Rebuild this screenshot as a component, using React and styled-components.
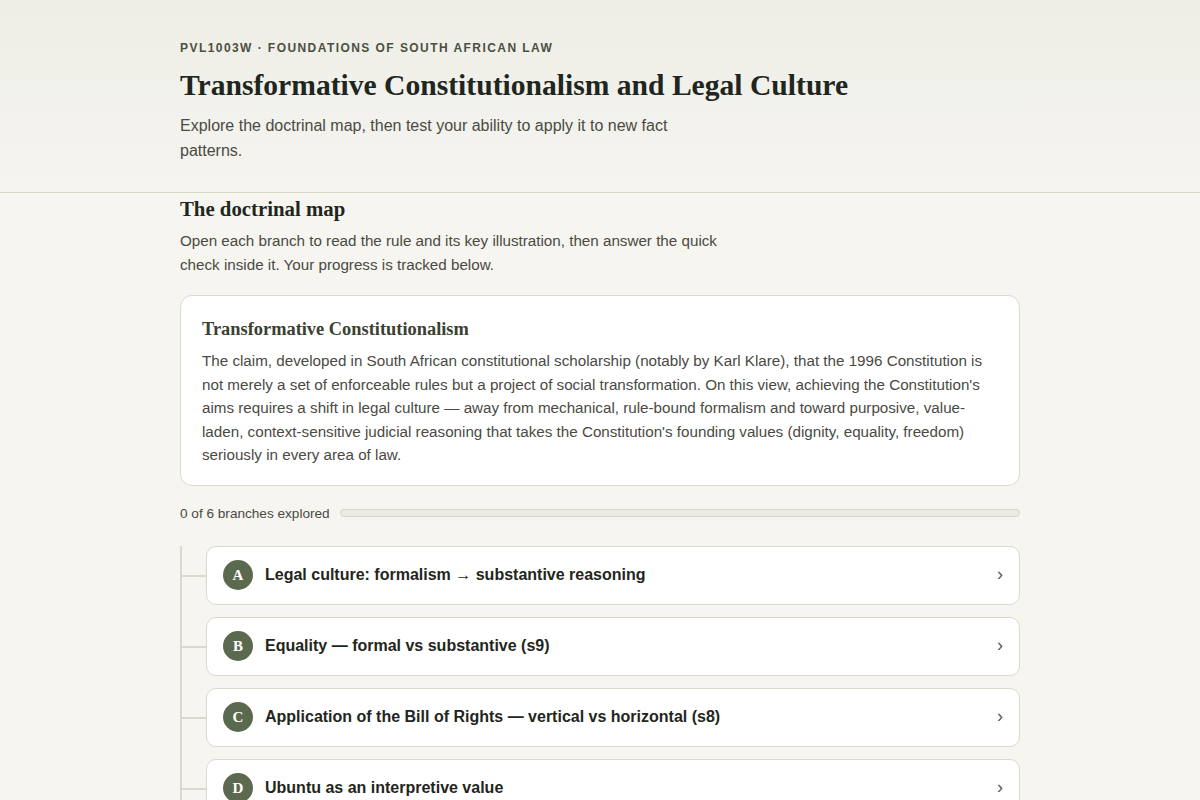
import React from "react";
import styled, { createGlobalStyle } from "styled-components";

const Global = createGlobalStyle`
  html, body { margin: 0; padding: 0; }
  body {
    background: #f6f5f0;
    font-family: "Liberation Sans", Arial, sans-serif;
    color: #2a2e26;
  }
  * { box-sizing: border-box; }
`;

const Header = styled.header`
  background: linear-gradient(180deg, #eeeee7 0%, #f5f4ef 100%);
  border-bottom: 1px solid #dcd6c8;
  padding: 40px 0 29px;
`;

const Inner = styled.div`
  width: 840px;
  margin: 0 auto;
`;

const Eyebrow = styled.div`
  font-size: 12px;
  font-weight: 700;
  letter-spacing: 1.44px;
  text-transform: uppercase;
  color: #4a5040;
  line-height: 16px;
`;

const Title = styled.h1`
  font-family: "Liberation Serif", "Times New Roman", serif;
  font-weight: 700;
  font-size: 29.6px;
  line-height: 36px;
  color: #1f2620;
  margin: 11px 0 10px;
`;

const Lead = styled.p`
  margin: 0;
  font-size: 16px;
  line-height: 25px;
  color: #4a4a44;
  max-width: 520px;
`;

const Section = styled.section`
  padding: 3px 0 0;
`;

const SectionTitle = styled.h2`
  font-family: "Liberation Serif", "Times New Roman", serif;
  font-weight: 700;
  font-size: 20.8px;
  line-height: 26px;
  color: #1f2620;
  margin: 0 0 7px;
`;

const SectionText = styled.p`
  margin: 0;
  font-size: 15.2px;
  line-height: 24px;
  color: #4a4a44;
  max-width: 560px;
`;

const DefCard = styled.div`
  margin-top: 18px;
  background: #ffffff;
  border: 1px solid #ddd8cc;
  border-radius: 12px;
  padding: 21px 21px 18px;
`;

const DefTitle = styled.h3`
  font-family: "Liberation Serif", "Times New Roman", serif;
  font-weight: 700;
  font-size: 18.4px;
  line-height: 24px;
  color: #3b4030;
  margin: 0 0 8px;
`;

const DefText = styled.p`
  margin: 0;
  font-size: 15.2px;
  line-height: 23.5px;
  color: #4a4a44;
`;

const Progress = styled.div`
  display: flex;
  align-items: center;
  gap: 10px;
  margin-top: 20px;
`;

const ProgressLabel = styled.span`
  font-size: 13.6px;
  color: #4a4a44;
  white-space: nowrap;
`;

const Track = styled.div`
  flex: 1;
  height: 8px;
  border-radius: 999px;
  background: #ecebe3;
  border: 1px solid #d8d4c6;
  overflow: hidden;
`;

const Fill = styled.div`
  height: 100%;
  background: #5b6a4f;
`;

const Tree = styled.div`
  margin-top: 25px;
  border-left: 2px solid #ddd8cc;
  display: flex;
  flex-direction: column;
  gap: 12px;
  padding-bottom: 40px;
`;

const Branch = styled.div`
  position: relative;
  margin-left: 24px;
  &::before {
    content: "";
    position: absolute;
    left: -24px;
    top: 50%;
    width: 24px;
    height: 2px;
    background: #ddd8cc;
  }
`;

const BranchButton = styled.button`
  width: 100%;
  display: flex;
  align-items: center;
  gap: 12px;
  height: 59px;
  padding: 0 16px;
  background: #ffffff;
  border: 1px solid #ddd8cc;
  border-radius: 10px;
  font-family: "Liberation Sans", Arial, sans-serif;
  text-align: left;
  cursor: pointer;
`;

const Badge = styled.span`
  flex: none;
  width: 30px;
  height: 30px;
  border-radius: 50%;
  background: #5b6a4f;
  color: #ffffff;
  display: flex;
  align-items: center;
  justify-content: center;
  font-family: "Liberation Serif", "Times New Roman", serif;
  font-weight: 700;
  font-size: 15px;
`;

const BranchTitle = styled.span`
  flex: 1;
  font-size: 16px;
  font-weight: 700;
  color: #1f2620;
`;

const Chevron = styled.span`
  font-size: 18px;
  color: #555a50;
  line-height: 1;
  margin-top: -3px;
`;

const branches = [
  { letter: "A", title: "Legal culture: formalism → substantive reasoning" },
  { letter: "B", title: "Equality — formal vs substantive (s9)" },
  { letter: "C", title: "Application of the Bill of Rights — vertical vs horizontal (s8)" },
  { letter: "D", title: "Ubuntu as an interpretive value" },
  { letter: "E", title: "Transformation in private law" },
  { letter: "F", title: "Critiques and limits" },
];

export default function App() {
  const explored = 0;
  return (
    <>
      <Global />
      <Header>
        <Inner>
          <Eyebrow>PVL1003W · Foundations of South African Law</Eyebrow>
          <Title>Transformative Constitutionalism and Legal Culture</Title>
          <Lead>
            Explore the doctrinal map, then test your ability to apply it to new fact patterns.
          </Lead>
        </Inner>
      </Header>
      <Inner>
        <Section>
          <SectionTitle>The doctrinal map</SectionTitle>
          <SectionText>
            Open each branch to read the rule and its key illustration, then answer the quick
            check inside it. Your progress is tracked below.
          </SectionText>
          <DefCard>
            <DefTitle>Transformative Constitutionalism</DefTitle>
            <DefText>
              The claim, developed in South African constitutional scholarship (notably by Karl
              Klare), that the 1996 Constitution is not merely a set of enforceable rules but a
              project of social transformation. On this view, achieving the Constitution's aims
              requires a shift in legal culture — away from mechanical, rule-bound formalism and
              toward purposive, value-laden, context-sensitive judicial reasoning that takes the
              Constitution's founding values (dignity, equality, freedom) seriously in every area
              of law.
            </DefText>
          </DefCard>
          <Progress>
            <ProgressLabel>
              {explored} of {branches.length} branches explored
            </ProgressLabel>
            <Track>
              <Fill style={{ width: `${(explored / branches.length) * 100}%` }} />
            </Track>
          </Progress>
          <Tree>
            {branches.map((b) => (
              <Branch key={b.letter}>
                <BranchButton>
                  <Badge>{b.letter}</Badge>
                  <BranchTitle>{b.title}</BranchTitle>
                  <Chevron>›</Chevron>
                </BranchButton>
              </Branch>
            ))}
          </Tree>
        </Section>
      </Inner>
    </>
  );
}
